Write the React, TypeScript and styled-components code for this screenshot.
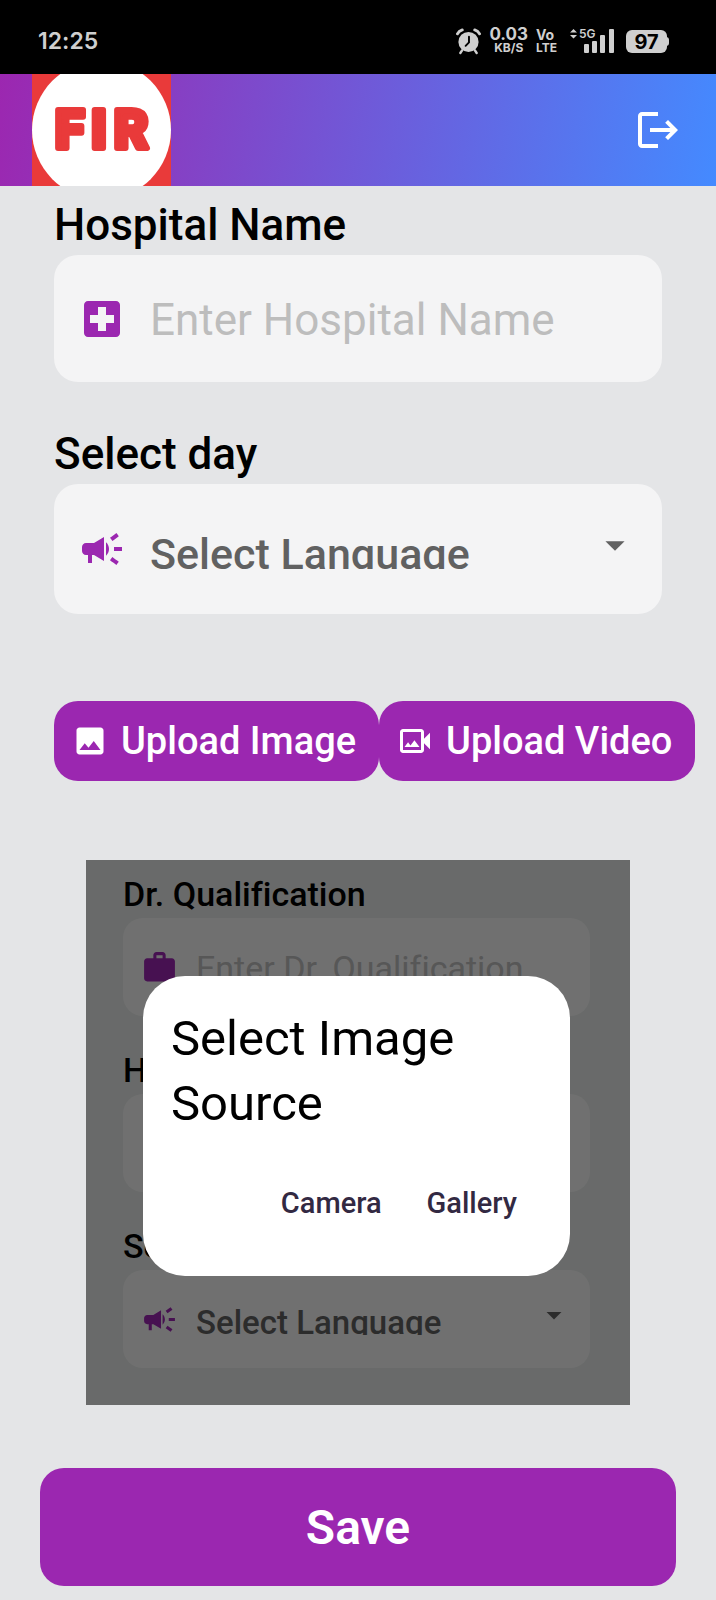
import React, { useId } from "react";
import styled, { createGlobalStyle } from "styled-components";
import {
  MdArrowDropDown,
  MdCampaign,
  MdImage,
  MdLocalHospital,
  MdLogout,
  MdOutlineVideoCameraBack,
  MdWork,
} from "react-icons/md";

const purple = "#9b27b0";

const GlobalStyle = createGlobalStyle`
  * { box-sizing: border-box; }
  body {
    margin: 0;
    background: #e4e5e7;
    font-family: Roboto, "Liberation Sans", sans-serif;
    font-variant-ligatures: none;
    color: #000;
  }
  button, input, select {
    font-family: inherit;
    font-variant-ligatures: none;
  }
`;

const Screen = styled.div`
  min-height: 100vh;
  display: flex;
  flex-direction: column;
`;

/* ---------- status bar ---------- */

const StatusBar = styled.div`
  height: 74px;
  padding: 8px 46px 0 38px;
  display: flex;
  align-items: center;
  justify-content: space-between;
  background: #000;
  color: #cfcfcf;
  font-family: Inter, "Liberation Sans", sans-serif;
  font-weight: 700;
`;

const Clock = styled.span`
  font-size: 23px;
  font-weight: 600;
`;

const StatusIcons = styled.div`
  display: flex;
  align-items: center;
`;

const Stack = styled.div<{ $align: string }>`
  display: flex;
  flex-direction: column;
  align-items: ${(p) => p.$align};
  margin-left: 8px;
`;

const StackText = styled.span<{ $size: number }>`
  font-size: ${(p) => p.$size}px;
  line-height: 13px;
`;

const Signal = styled.svg`
  margin-left: 12px;
`;

const Battery = styled.span`
  position: relative;
  width: 41px;
  height: 23px;
  margin: 0 3px 0 12px;
  border-radius: 6px;
  background: #cfcfcf;
  color: #000;
  font-size: 20px;
  line-height: 24px;
  text-align: center;

  &::after {
    content: "";
    position: absolute;
    right: -2px;
    top: 7px;
    width: 3px;
    height: 9px;
    border-radius: 0 3px 3px 0;
    background: #cfcfcf;
  }
`;

/* ---------- app bar ---------- */

const AppBar = styled.header`
  height: 112px;
  padding: 0 34px 0 32px;
  display: flex;
  align-items: center;
  justify-content: space-between;
  background: linear-gradient(99deg, #9c27b0, #448aff);
`;

const IconButton = styled.button`
  display: flex;
  padding: 0;
  border: 0;
  background: none;
  color: #fff;
  cursor: pointer;
`;

/* ---------- form ---------- */

const Form = styled.form`
  padding: 13px 54px 0;
  display: flex;
  flex-direction: column;
`;

const FieldList = styled.div<{ $small?: boolean }>`
  display: flex;
  flex-direction: column;
  gap: ${(p) => (p.$small ? 34 : 46)}px;
`;

const FieldGroup = styled.div`
  display: flex;
  flex-direction: column;
  gap: 4px;
`;

const Label = styled.label<{ $small?: boolean }>`
  font-size: ${(p) => (p.$small ? 34 : 44)}px;
  line-height: ${(p) => (p.$small ? 40 : 52)}px;
  font-weight: 500;
  white-space: nowrap;
`;

const FieldBox = styled.div<{ $small?: boolean; $height: number }>`
  height: ${(p) => p.$height}px;
  padding: 0 ${(p) => (p.$small ? 18 : 24)}px;
  border-radius: ${(p) => (p.$small ? 20 : 24)}px;
  display: flex;
  align-items: center;
  gap: ${(p) => (p.$small ? 18 : 24)}px;
  background: #f4f4f5;

  & > svg {
    flex: none;
  }
`;

const TextInput = styled.input<{ $small?: boolean }>`
  flex: 1;
  min-width: 0;
  padding: 2px 0 0;
  border: 0;
  outline: 0;
  background: none;
  font-size: ${(p) => (p.$small ? 34 : 44)}px;

  &::placeholder {
    color: #bdbdbd;
    opacity: 1;
  }
`;

/* The one-line box is shorter than the text, so descenders are cut off. */
const SelectClip = styled.div<{ $small?: boolean }>`
  flex: 1;
  min-width: 0;
  height: ${(p) => (p.$small ? 32 : 40)}px;
  overflow: hidden;
`;

const Select = styled.select<{ $small?: boolean }>`
  appearance: none;
  display: block;
  width: 100%;
  padding: 0;
  border: 0;
  outline: 0;
  background: none;
  color: #616161;
  font-size: ${(p) => (p.$small ? 33 : 43)}px;
  font-weight: 500;
`;

const Caret = styled.span`
  display: flex;
  padding-bottom: 8px;
  color: #616161;
  pointer-events: none;
`;

const UploadRow = styled.div`
  display: flex;
  margin: 87px -34px 79px 0;
`;

const UploadButton = styled.button`
  flex: none;
  height: 80px;
  padding: 0 23px 0 18px;
  border: 0;
  border-radius: 24px;
  display: flex;
  align-items: center;
  gap: 13px;
  background: ${purple};
  color: #fff;
  font-size: 38px;
  font-weight: 500;
  white-space: nowrap;
  cursor: pointer;
`;

/* ---------- preview with dialog ---------- */

const Preview = styled.section`
  position: relative;
  margin: 0 32px;
  padding: 14px 40px 37px 37px;
  background: #e4e8e6;
`;

const Scrim = styled.div`
  position: absolute;
  inset: 0;
  padding: 0 60px 13px 57px;
  display: flex;
  align-items: center;
  background: rgba(0, 0, 0, 0.54);
`;

const Dialog = styled.div`
  width: 100%;
  padding: 30px 53px 56px 28px;
  border-radius: 42px;
  background: #fff;
`;

const DialogTitle = styled.h2`
  margin: 0 0 50px;
  font-size: 49px;
  line-height: 65px;
  font-weight: 400;
`;

const DialogActions = styled.div`
  display: flex;
  justify-content: flex-end;
  gap: 45px;
`;

const TextButton = styled.button`
  padding: 0;
  border: 0;
  background: none;
  color: #322942;
  font-size: 29px;
  line-height: 34px;
  font-weight: 500;
  cursor: pointer;
`;

const SaveBar = styled.div`
  padding: 63px 40px 14px;
`;

const SaveButton = styled.button`
  width: 100%;
  height: 118px;
  border: 0;
  border-radius: 24px;
  background: ${purple};
  color: #fff;
  font-size: 48px;
  font-weight: 600;
  cursor: pointer;
`;

function Logo() {
  return (
    <svg width="139" height="112" viewBox="0 0 139 112" role="img" aria-label="FIR">
      <rect width="139" height="112" fill="#e93a3a" />
      <circle cx="69.5" cy="56" r="69.5" fill="#fff" />
      <text
        x="23 59 82"
        y="74"
        fontFamily="Roboto, sans-serif"
        fontSize="53"
        fontWeight="800"
        fill="#e93a3a"
        stroke="#e93a3a"
        strokeWidth="6"
        strokeLinejoin="round"
      >
        FIR
      </text>
    </svg>
  );
}

function AlarmIcon() {
  return (
    <svg width="25" height="27" viewBox="0 0 26 27" fill="none" stroke="#cfcfcf" strokeLinecap="round">
      <circle cx="13" cy="14" r="10.5" fill="#cfcfcf" stroke="none" />
      <path d="M1.5 5.5Q3 2.5 6.5 1.5M24.5 5.5Q23 2.5 19.5 1.5" strokeWidth="3" />
      <path d="M6.5 22.5L4.5 25.5M19.5 22.5L21.5 25.5" strokeWidth="2.5" />
      <path d="M13.5 8.5V14.5L10 18" stroke="#000" strokeWidth="2" />
    </svg>
  );
}

function SignalIcon() {
  return (
    <Signal width="45" height="38" viewBox="0 -6 45 38" fill="#cfcfcf">
      <path d="M1 4.5L4.5 1L8 4.5zM1 7L4.5 10.5L8 7z" />
      <text x="10" y="10" fontFamily="Inter, sans-serif" fontSize="12" fontWeight="600">
        5G
      </text>
      <rect x="15" y="16" width="5" height="9" rx="1" />
      <rect x="23" y="13" width="5" height="12" rx="1" />
      <rect x="31" y="7" width="5" height="18" rx="1" />
      <rect x="40" y="1" width="5" height="24" rx="1" />
    </Signal>
  );
}

type FieldProps = {
  label: string;
  icon: React.ComponentType<{ size?: number; color?: string }>;
  text: string;
  small?: boolean;
};

function TextField({ label, icon: Icon, text, small }: FieldProps) {
  const id = useId();
  return (
    <FieldGroup>
      <Label htmlFor={id} $small={small}>{label}</Label>
      <FieldBox $small={small} $height={small ? 98 : 127}>
        <Icon size={small ? 37 : 48} color={purple} />
        <TextInput id={id} type="text" placeholder={text} $small={small} />
      </FieldBox>
    </FieldGroup>
  );
}

function SelectField({ label, icon: Icon, text, small }: FieldProps) {
  const id = useId();
  return (
    <FieldGroup>
      <Label htmlFor={id} $small={small}>{label}</Label>
      <FieldBox $small={small} $height={small ? 98 : 130}>
        <Icon size={small ? 37 : 48} color={purple} />
        <SelectClip $small={small}>
          <Select id={id} $small={small}>
            <option>{text}</option>
          </Select>
        </SelectClip>
        <Caret>
          <MdArrowDropDown size={small ? 36 : 46} />
        </Caret>
      </FieldBox>
    </FieldGroup>
  );
}

export default function App() {
  return (
    <Screen>
      <GlobalStyle />
      <StatusBar>
        <Clock>12:25</Clock>
        <StatusIcons>
          <AlarmIcon />
          <Stack $align="center">
            <StackText $size={17}>0.03</StackText>
            <StackText $size={12}>KB/S</StackText>
          </Stack>
          <Stack $align="flex-start">
            <StackText $size={14}>Vo</StackText>
            <StackText $size={12}>LTE</StackText>
          </Stack>
          <SignalIcon />
          <Battery>97</Battery>
        </StatusIcons>
      </StatusBar>

      <AppBar>
        <Logo />
        <IconButton type="button" aria-label="Log out">
          <MdLogout size={48} />
        </IconButton>
      </AppBar>

      <Form onSubmit={(e) => e.preventDefault()}>
        <FieldList>
          <TextField label="Hospital Name" icon={MdLocalHospital} text="Enter Hospital Name" />
          <SelectField label="Select day" icon={MdCampaign} text="Select Language" />
        </FieldList>

        <UploadRow>
          <UploadButton type="button">
            <MdImage size={36} />
            Upload Image
          </UploadButton>
          <UploadButton type="button">
            <MdOutlineVideoCameraBack size={36} />
            Upload Video
          </UploadButton>
        </UploadRow>

        <Preview>
          <FieldList $small>
            <TextField small label="Dr. Qualification" icon={MdWork} text="Enter Dr. Qualification" />
            <TextField small label="Hospital Name" icon={MdLocalHospital} text="Enter Hospital Name" />
            <SelectField small label="Select day" icon={MdCampaign} text="Select Language" />
          </FieldList>
          <Scrim>
            <Dialog role="dialog" aria-labelledby="source-title">
              <DialogTitle id="source-title">Select Image Source</DialogTitle>
              <DialogActions>
                <TextButton type="button">Camera</TextButton>
                <TextButton type="button">Gallery</TextButton>
              </DialogActions>
            </Dialog>
          </Scrim>
        </Preview>
      </Form>

      <SaveBar>
        <SaveButton type="button">Save</SaveButton>
      </SaveBar>
    </Screen>
  );
}
